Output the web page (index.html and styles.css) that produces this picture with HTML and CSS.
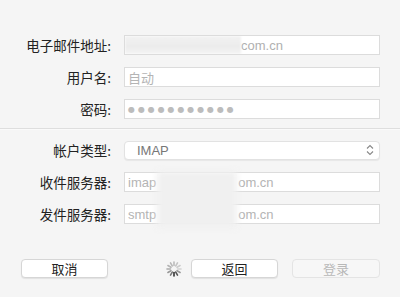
FILE: index.html
```html
<!DOCTYPE html>
<html lang="zh-CN">
<head>
    <meta charset="UTF-8">
    <title>添加帐户</title>
    <link rel="stylesheet" href="styles.css">
</head>
<body>
    <div class="sheet">
        <div class="group top">
            <div class="row">
                <label>电子邮件地址:</label>
                <div class="field"><span class="smudge wide"></span><span class="val">com.cn</span></div>
            </div>
            <div class="row">
                <label>用户名:</label>
                <div class="field"><span class="ph">自动</span></div>
            </div>
            <div class="row">
                <label>密码:</label>
                <div class="field"><span class="dots">●●●●●●●●●●●</span></div>
            </div>
        </div>

        <div class="sep"></div>

        <div class="group bottom">
            <div class="row">
                <label>帐户类型:</label>
                <div class="field select">
                    <span class="sel">IMAP</span>
                    <svg class="arrows" width="8" height="12" viewBox="0 0 8 12">
                        <path d="M1 4.5 L4 1.5 L7 4.5 M1 7.5 L4 10.5 L7 7.5" fill="none" stroke="#888" stroke-width="1.1"/>
                    </svg>
                </div>
            </div>
            <div class="row">
                <label>收件服务器:</label>
                <div class="field"><span class="ph">imap</span><span class="gap"></span><span class="ph">om.cn</span></div>
            </div>
            <div class="row">
                <label>发件服务器:</label>
                <div class="field"><span class="ph">smtp</span><span class="gap"></span><span class="ph">om.cn</span></div>
            </div>
            <div class="blur"></div>
        </div>

        <div class="buttons">
            <button class="btn">取消</button>
            <div class="right">
                <svg class="spinner" width="16" height="16" viewBox="-8 -8 16 16">
                    <g stroke-width="1.6" stroke-linecap="round">
                        <line x1="0" y1="-3.5" x2="0" y2="-7" stroke="#bbb" transform="rotate(0)"/>
                        <line x1="0" y1="-3.5" x2="0" y2="-7" stroke="#c4c4c4" transform="rotate(30)"/>
                        <line x1="0" y1="-3.5" x2="0" y2="-7" stroke="#ccc" transform="rotate(60)"/>
                        <line x1="0" y1="-3.5" x2="0" y2="-7" stroke="#d2d2d2" transform="rotate(90)"/>
                        <line x1="0" y1="-3.5" x2="0" y2="-7" stroke="#999" transform="rotate(120)"/>
                        <line x1="0" y1="-3.5" x2="0" y2="-7" stroke="#555" transform="rotate(150)"/>
                        <line x1="0" y1="-3.5" x2="0" y2="-7" stroke="#333" transform="rotate(180)"/>
                        <line x1="0" y1="-3.5" x2="0" y2="-7" stroke="#777" transform="rotate(210)"/>
                        <line x1="0" y1="-3.5" x2="0" y2="-7" stroke="#999" transform="rotate(240)"/>
                        <line x1="0" y1="-3.5" x2="0" y2="-7" stroke="#aaa" transform="rotate(270)"/>
                        <line x1="0" y1="-3.5" x2="0" y2="-7" stroke="#b4b4b4" transform="rotate(300)"/>
                        <line x1="0" y1="-3.5" x2="0" y2="-7" stroke="#b8b8b8" transform="rotate(330)"/>
                    </g>
                </svg>
                <button class="btn">返回</button>
                <button class="btn disabled">登录</button>
            </div>
        </div>
    </div>
</body>
</html>
```

FILE: styles.css
```css
body {
    margin: 0;
    background: #f5f5f5;
    font-family: "Noto Sans CJK SC", "Liberation Sans", sans-serif;
    font-size: 13px;
    color: #222;
}
.sheet {
    width: 400px;
    height: 297px;
    position: relative;
}
.group {
    display: flex;
    flex-direction: column;
    padding-right: 20px;
    position: relative;
}
.top {
    padding-top: 35px;
    gap: 12px;
}
.bottom {
    padding-top: 11px;
    gap: 12px;
}
.row {
    display: flex;
    align-items: center;
    height: 20px;
}
.row label {
    width: 124px;
    text-align: right;
    padding-right: 13px;
    box-sizing: border-box;
    font-size: 13.5px;
    line-height: 20px;
}
.field {
    flex: 1;
    height: 20px;
    box-sizing: border-box;
    background: #fff;
    border: 1px solid #dcdcdc;
    display: flex;
    align-items: center;
    padding-left: 3px;
    font-family: "Liberation Sans", "Noto Sans CJK SC", sans-serif;
    font-size: 13px;
    color: #aaa;
    overflow: hidden;
}
.field .ph {
    color: #b4b4b4;
}
.field .val {
    color: #b0b0b0;
}
.dots {
    font-family: "DejaVu Sans", sans-serif;
    font-size: 8px;
    letter-spacing: 2.9px;
    color: #bcbcbc;
}
.smudge.wide {
    width: 116px;
    height: 18px;
    margin-left: -3px;
    background: linear-gradient(180deg, #f2f2f2, #ececec 60%, #f4f4f4);
    filter: blur(1px);
}
.gap {
    width: 82px;
}
.select {
    height: 19px;
    border-color: #e2e2e2;
    border-radius: 4px;
    box-shadow: 0 1px 1px rgba(0, 0, 0, 0.06);
    justify-content: space-between;
    padding-left: 12px;
    padding-right: 5px;
}
.sel {
    color: #777;
    font-size: 13px;
}
.blur {
    position: absolute;
    left: 157px;
    top: 42px;
    width: 80px;
    height: 57px;
    background: #f0f0f0;
    filter: blur(3px);
}
.sep {
    margin-top: 9px;
    height: 1px;
    background: #dedede;
    box-shadow: 0 1px 0 #fafafa;
}
.buttons {
    display: flex;
    justify-content: space-between;
    align-items: center;
    padding: 0 20px 0 21px;
    margin-top: 35px;
}
.right {
    display: flex;
    align-items: center;
}
.spinner {
    margin-right: 9px;
}
.btn {
    width: 87px;
    height: 19px;
    padding: 0;
    background: #fff;
    border: 1px solid #d6d6d6;
    border-radius: 4px;
    box-shadow: 0 1px 1px rgba(0, 0, 0, 0.08);
    font-family: "Noto Sans CJK SC", sans-serif;
    font-size: 13px;
    line-height: 17px;
    color: #222;
}
.btn.disabled {
    margin-left: 14px;
    width: 88px;
    background: #f7f7f7;
    border-color: #e4e4e4;
    color: #b8b8b8;
    box-shadow: none;
}
```
